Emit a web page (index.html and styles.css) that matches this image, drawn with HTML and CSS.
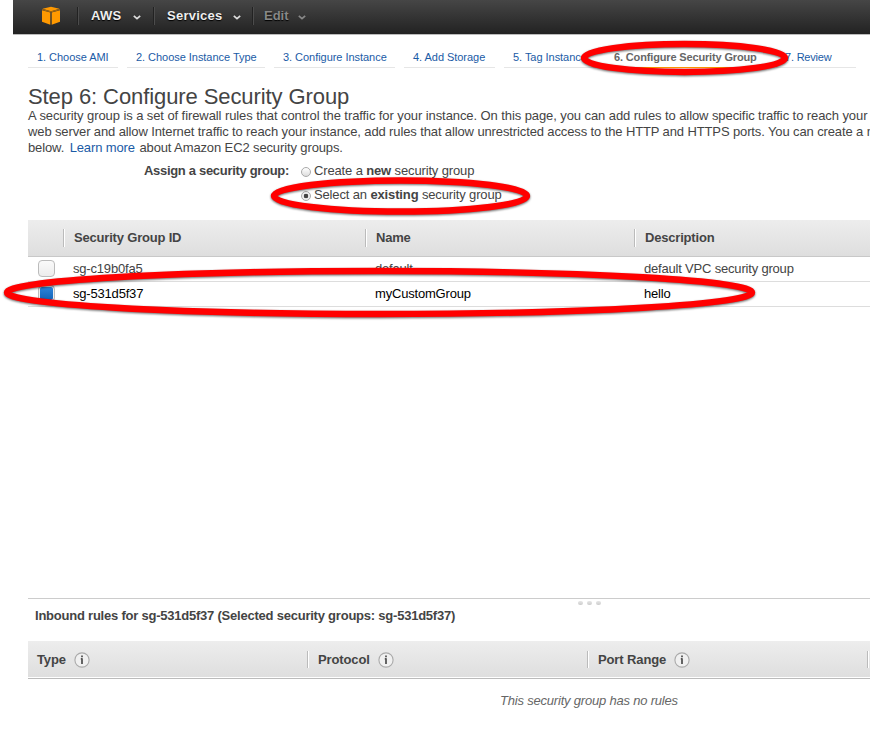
FILE: index.html
```html
<!DOCTYPE html>
<html lang="en">
<head>
<meta charset="utf-8">
<title>Step 6: Configure Security Group</title>
<link rel="stylesheet" href="styles.css">
</head>
<body>
<header class="topbar">
  <svg class="logo" width="20" height="20" viewBox="0 0 20 20">
    <path fill="#f90" d="M1.5 2.8 10 .8l8.500 2L10 5.200z"/>
    <path fill="#f90" d="M1 4.300 9.300 6.600v12.200L1 15.800zM19 4.300l-8.300 2.300v12.200l8.300-3z"/>
    <path stroke="#c27400" stroke-width=".9" d="M1.300 3.500 10 5.900l8.700-2.400" fill="none"/>
  </svg>
  <span class="menu menu-aws">AWS <svg width="8" height="5" viewBox="0 0 8 5"><path d="M.8.8 4 3.6 7.2.8"/></svg></span>
  <span class="menu menu-services">Services <svg width="8" height="5" viewBox="0 0 8 5"><path d="M.8.8 4 3.6 7.2.8"/></svg></span>
  <span class="menu menu-edit">Edit <svg width="8" height="5" viewBox="0 0 8 5"><path d="M.8.8 4 3.6 7.2.8"/></svg></span>
</header>
<nav class="steps">
  <a class="s1">1. Choose AMI</a>
  <a class="s2">2. Choose Instance Type</a>
  <a class="s3">3. Configure Instance</a>
  <a class="s4">4. Add Storage</a>
  <a class="s5">5. Tag Instance</a>
  <a class="s6 active">6. Configure Security Group</a>
  <a class="s7">7. Review</a>
</nav>
<main>
  <h1>Step 6: Configure Security Group</h1>
  <div class="intro">
    <div class="l1">A security group is a set of firewall rules that control the traffic for your instance. On this page, you can add rules to allow specific traffic to reach your</div>
    <div class="l2">web server and allow Internet traffic to reach your instance, add rules that allow unrestricted access to the HTTP and HTTPS ports. You can create a n</div>
    <div class="l3">below. <a>Learn more</a> about Amazon EC2 security groups.</div>
  </div>
  <div class="assign">
    <b class="label">Assign a security group:</b>
    <div class="options">
      <label><i class="radio"></i><span>Create a <b>new</b> security group</span></label>
      <label><i class="radio on"></i><span>Select an <b>existing</b> security group</span></label>
    </div>
  </div>
  <section class="groups">
    <div class="row head"><span></span><span>Security Group ID</span><span>Name</span><span>Description</span></div>
    <div class="row"><span><i class="check"></i></span><span>sg-c19b0fa5</span><span>default</span><span>default VPC security group</span></div>
    <div class="row selected"><span><i class="check on"></i></span><span>sg-531d5f37</span><span>myCustomGroup</span><span>hello</span></div>
  </section>
  <section class="rules">
    <div class="grip"><i></i><i></i><i></i></div>
    <h2>Inbound rules for sg-531d5f37 (Selected security groups: sg-531d5f37)</h2>
    <div class="rhead">
      <span>Type <svg width="16" height="16" viewBox="0 0 16 16"><circle cx="8" cy="8" r="7.1"/><path d="M8 6.3v5.7M6.8 6.8H8M8 3.6v1.7"/></svg></span>
      <span>Protocol <svg width="16" height="16" viewBox="0 0 16 16"><circle cx="8" cy="8" r="7.1"/><path d="M8 6.3v5.7M6.8 6.8H8M8 3.6v1.7"/></svg></span>
      <span>Port Range <svg width="16" height="16" viewBox="0 0 16 16"><circle cx="8" cy="8" r="7.1"/><path d="M8 6.3v5.7M6.8 6.8H8M8 3.6v1.7"/></svg></span>
      <span></span>
    </div>
    <p class="empty">This security group has no rules</p>
  </section>
</main>
<svg class="marks" width="870" height="734" viewBox="0 0 870 734">
  <ellipse cx="684.5" cy="58" rx="100.5" ry="14"/>
  <ellipse cx="400.5" cy="196" rx="126.5" ry="15.5"/>
  <ellipse cx="379.5" cy="292.5" rx="372.5" ry="21.5"/>
</svg>
</body>
</html>
```
FILE: styles.css
```css
* { box-sizing: border-box; }
body {
  margin: 0;
  width: 870px;
  height: 734px;
  overflow: hidden;
  position: relative;
  background: #fff;
  color: #444;
  font: 13px/16px "Liberation Sans", Arial, sans-serif;
  white-space: nowrap;
}
.topbar {
  margin-left: 13px;
  height: 35px;
  display: flex;
  align-items: center;
  background: linear-gradient(#464646, #222);
  border-bottom: 1px solid #bbb;
  padding: 0 0 2px 28px;
}
.menu {
  display: flex;
  align-items: center;
  justify-content: space-between;
  height: 18px;
  padding-left: 13px;
  border-left: 1px solid #222;
  box-shadow: inset 1px 0 #4c4c4c;
  color: #eee;
  font-weight: bold;
  letter-spacing: .25px;
  line-height: 18px;
  text-shadow: 0 1px 1px #000;
}
.menu svg { fill: none; stroke: #ddd; stroke-width: 1.7; margin-top: 2px; }
.menu-aws { margin-left: 16px; width: 64px; }
.menu-services { margin-left: 12px; width: 88px; }
.menu-edit { margin-left: 11px; padding-left: 11px; width: 54px; color: #888; letter-spacing: 0; }
.menu-edit svg { stroke: #888; }
.steps {
  display: flex;
  gap: 9px;
  margin-left: 28px;
  height: 33px;
  padding-top: 12px;
  font-size: 11px;
  line-height: 20px;
  letter-spacing: -.04px;
}
.steps a {
  height: 21px;
  padding-left: 9px;
  color: #1a5ba6;
  border-bottom: 1px solid #e6e6e6;
}
.steps .active { color: #666; font-weight: bold; border-color: #f90; letter-spacing: -.15px; }
.s1 { width: 90px; }
.s2 { width: 138px; }
.s3 { width: 121px; }
.s4 { width: 91px; }
.s5 { width: 92px; }
.s6 { width: 162px; }
.s7 { width: 80px; letter-spacing: -.2px; }
main { padding-left: 28px; }
h1 {
  margin: 16px 0 0;
  height: 24px;
  font-weight: normal;
  font-size: 22px;
  line-height: 26px;
  letter-spacing: -.09px;
}
.intro { letter-spacing: -.085px; }
.l2 { letter-spacing: -.12px; }
.l3 { letter-spacing: -.12px; }
.intro a { color: #1a5ba6; margin: 0 1px 0 2px; }
.assign { display: flex; height: 64px; padding-top: 7px; }
.label { width: 261px; text-align: right; letter-spacing: -.31px; }
.options { margin-left: 12px; letter-spacing: -.14px; }
.options label { display: flex; align-items: center; height: 16px; margin-bottom: 8px; }
.radio {
  width: 10px;
  height: 10px;
  margin: 2px 3px 0 0;
  border: 1px solid #aaa;
  border-radius: 50%;
  background: linear-gradient(#fff, #ddd);
}
.radio.on { background: radial-gradient(circle, #444 0 2px, #eee 2.6px); }
.row {
  display: grid;
  grid-template-columns: 36px 302px 269px 1fr;
  height: 25px;
  line-height: 24px;
  letter-spacing: -.19px;
  border-bottom: 1px solid #ddd;
}
.row span { padding-left: 9px; }
.row span:first-child { padding: 3px 0 0 10px; line-height: 0; }
.selected { color: #000; }
.row.head {
  grid-template-columns: 35px 302px 269px 1fr;
  height: 37px;
  background: linear-gradient(#ededed, #dedede);
  border-color: #c8c8c8;
  font-weight: bold;
  align-items: center;
}
.row.head span { height: 18px; line-height: 18px; padding-left: 10px; }
.row.head span + span { border-left: 1px solid #bbb; box-shadow: inset 1px 0 #fff; }
.check {
  display: block;
  width: 17px;
  height: 17px;
  border: 1px solid #bbb;
  border-radius: 4px;
  background: linear-gradient(#fafafa, #ececec);
}
.check.on { background: linear-gradient(#2f86dd, #1060b4); box-shadow: inset 0 0 0 1px #eee; }
.rules { margin-top: 291px; border-top: 1px solid #ccc; }
.grip { display: flex; gap: 4px; height: 8px; padding: 2px 0 0 550px; }
.grip i { width: 5px; height: 4px; border-radius: 2px; background: linear-gradient(#e6e6e6, #ccc); }
h2 { margin: 0 0 0 7px; height: 34px; font-size: 13px; line-height: 18px; letter-spacing: -.225px; }
.rhead {
  display: grid;
  grid-template-columns: 279px 280px 280px 1fr;
  align-items: center;
  height: 38px;
  background: linear-gradient(#ededed, #dedede);
  border-bottom: 1px solid #bbb;
  box-shadow: inset 0 -1px #fff;
  font-weight: bold;
  letter-spacing: -.12px;
}
.rhead span { display: flex; align-items: center; gap: 8px; height: 17px; padding-left: 9px; }
.rhead span + span { border-left: 1px solid #bbb; box-shadow: inset 1px 0 #fff; padding-left: 10px; }
.rhead svg { fill: none; stroke: #555; stroke-width: 1.8; }
.rhead circle { fill: #f0f0f0; stroke: #aaa; stroke-width: 1.1; }
.empty { margin: 14px 0 0 472px; color: #666; font-style: italic; letter-spacing: -.2px; }
.marks {
  position: absolute;
  left: 0;
  top: 0;
  fill: none;
  stroke: #f00;
  stroke-width: 6.4;
  filter: drop-shadow(0 1px 1px rgba(0, 0, 0, .6));
}
```
